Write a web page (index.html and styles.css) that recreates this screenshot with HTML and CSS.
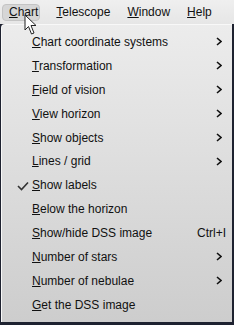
FILE: index.html
```html
<!DOCTYPE html>
<html lang="en">
<head>
  <meta charset="utf-8" />
  <title>Chart menu</title>
  <link rel="stylesheet" href="styles.css">
</head>
<body>
  <div class="menubar">
    <span class="top active"><u>C</u>hart</span>
    <span class="top"><u>T</u>elescope</span>
    <span class="top"><u>W</u>indow</span>
    <span class="top"><u>H</u>elp</span>
  </div>

  <div class="menu">
    <div class="item"><span class="label"><u>C</u>hart coordinate systems</span><svg class="arrow" width="6" height="9" viewBox="0 0 6 9"><path d="M1 1 L5 4.5 L1 8" fill="none" stroke="#111" stroke-width="1.6"/></svg></div>
    <div class="item"><span class="label"><u>T</u>ransformation</span><svg class="arrow" width="6" height="9" viewBox="0 0 6 9"><path d="M1 1 L5 4.5 L1 8" fill="none" stroke="#111" stroke-width="1.6"/></svg></div>
    <div class="item"><span class="label"><u>F</u>ield of vision</span><svg class="arrow" width="6" height="9" viewBox="0 0 6 9"><path d="M1 1 L5 4.5 L1 8" fill="none" stroke="#111" stroke-width="1.6"/></svg></div>
    <div class="item"><span class="label"><u>V</u>iew horizon</span><svg class="arrow" width="6" height="9" viewBox="0 0 6 9"><path d="M1 1 L5 4.5 L1 8" fill="none" stroke="#111" stroke-width="1.6"/></svg></div>
    <div class="item"><span class="label"><u>S</u>how objects</span><svg class="arrow" width="6" height="9" viewBox="0 0 6 9"><path d="M1 1 L5 4.5 L1 8" fill="none" stroke="#111" stroke-width="1.6"/></svg></div>
    <div class="item"><span class="label"><u>L</u>ines / grid</span><svg class="arrow" width="6" height="9" viewBox="0 0 6 9"><path d="M1 1 L5 4.5 L1 8" fill="none" stroke="#111" stroke-width="1.6"/></svg></div>
    <div class="item checked">
      <svg class="check" width="12" height="10" viewBox="0 0 12 10"><path d="M1 5 L4.5 8.5 L11 1.5" fill="none" stroke="#333" stroke-width="1.6"/></svg>
      <span class="label"><u>S</u>how labels</span>
    </div>
    <div class="item"><span class="label"><u>B</u>elow the horizon</span></div>
    <div class="item"><span class="label"><u>S</u>how/hide DSS image</span><span class="shortcut">Ctrl+I</span></div>
    <div class="item"><span class="label"><u>N</u>umber of stars</span><svg class="arrow" width="6" height="9" viewBox="0 0 6 9"><path d="M1 1 L5 4.5 L1 8" fill="none" stroke="#111" stroke-width="1.6"/></svg></div>
    <div class="item"><span class="label"><u>N</u>umber of nebulae</span><svg class="arrow" width="6" height="9" viewBox="0 0 6 9"><path d="M1 1 L5 4.5 L1 8" fill="none" stroke="#111" stroke-width="1.6"/></svg></div>
    <div class="item"><span class="label"><u>G</u>et the DSS image</span></div>
  </div>

  <!-- mouse pointer over the menubar -->
  <svg class="cursor" width="14" height="22" viewBox="0 0 14 22">
    <path d="M1 1 L1 16 L4.5 12.5 L7.5 20 L10 19 L7 11.5 L12 11.5 Z" fill="#fff" stroke="#222" stroke-width="1"/>
  </svg>
</body>
</html>
```
FILE: styles.css
```css
/* base */
html, body { margin: 0; padding: 0; }
body {
  width: 234px; height: 325px;
  background: #1e2230;
  font-family: Arial, "Liberation Sans", Arimo, sans-serif;
  font-size: 12px; color: #111;
  position: relative; overflow: hidden;
}
u { text-decoration: underline; text-underline-offset: 1px; }

/* menubar */
.menubar {
  height: 24px;
  background: linear-gradient(#efefef, #e6e6e6);
  display: flex; align-items: center;
  padding-left: 2px;
}
.top { padding: 1px 8px 2px 9px; border-radius: 4px; }
.top.active {
  background: #d6d6d6;
  border: 1px solid #c4c4c4;
  padding: 0 1px 1px 6px;
  margin-right: 7px;
}

/* dropdown */
.menu {
  margin: 0 0 0 1px;
  width: 231px; height: 298px;
  box-sizing: border-box;
  padding-top: 5px;
  background: linear-gradient(#ececec, #cdcdcd);
  border-radius: 4px 0 0 0;
  border-left: 1px solid #f8f8f8;
  border-top: 1px solid #f8f8f8;
}
.item {
  height: 23.9px;
  display: flex; align-items: center;
  padding-left: 30px; padding-right: 9px;
  position: relative;
}
.label { flex: 1; }
.arrow { margin-right: 1px; }
.shortcut { margin-right: -3px; }
.check { position: absolute; left: 15px; top: 8px; }

.cursor { position: absolute; left: 24px; top: 14px; }
```
